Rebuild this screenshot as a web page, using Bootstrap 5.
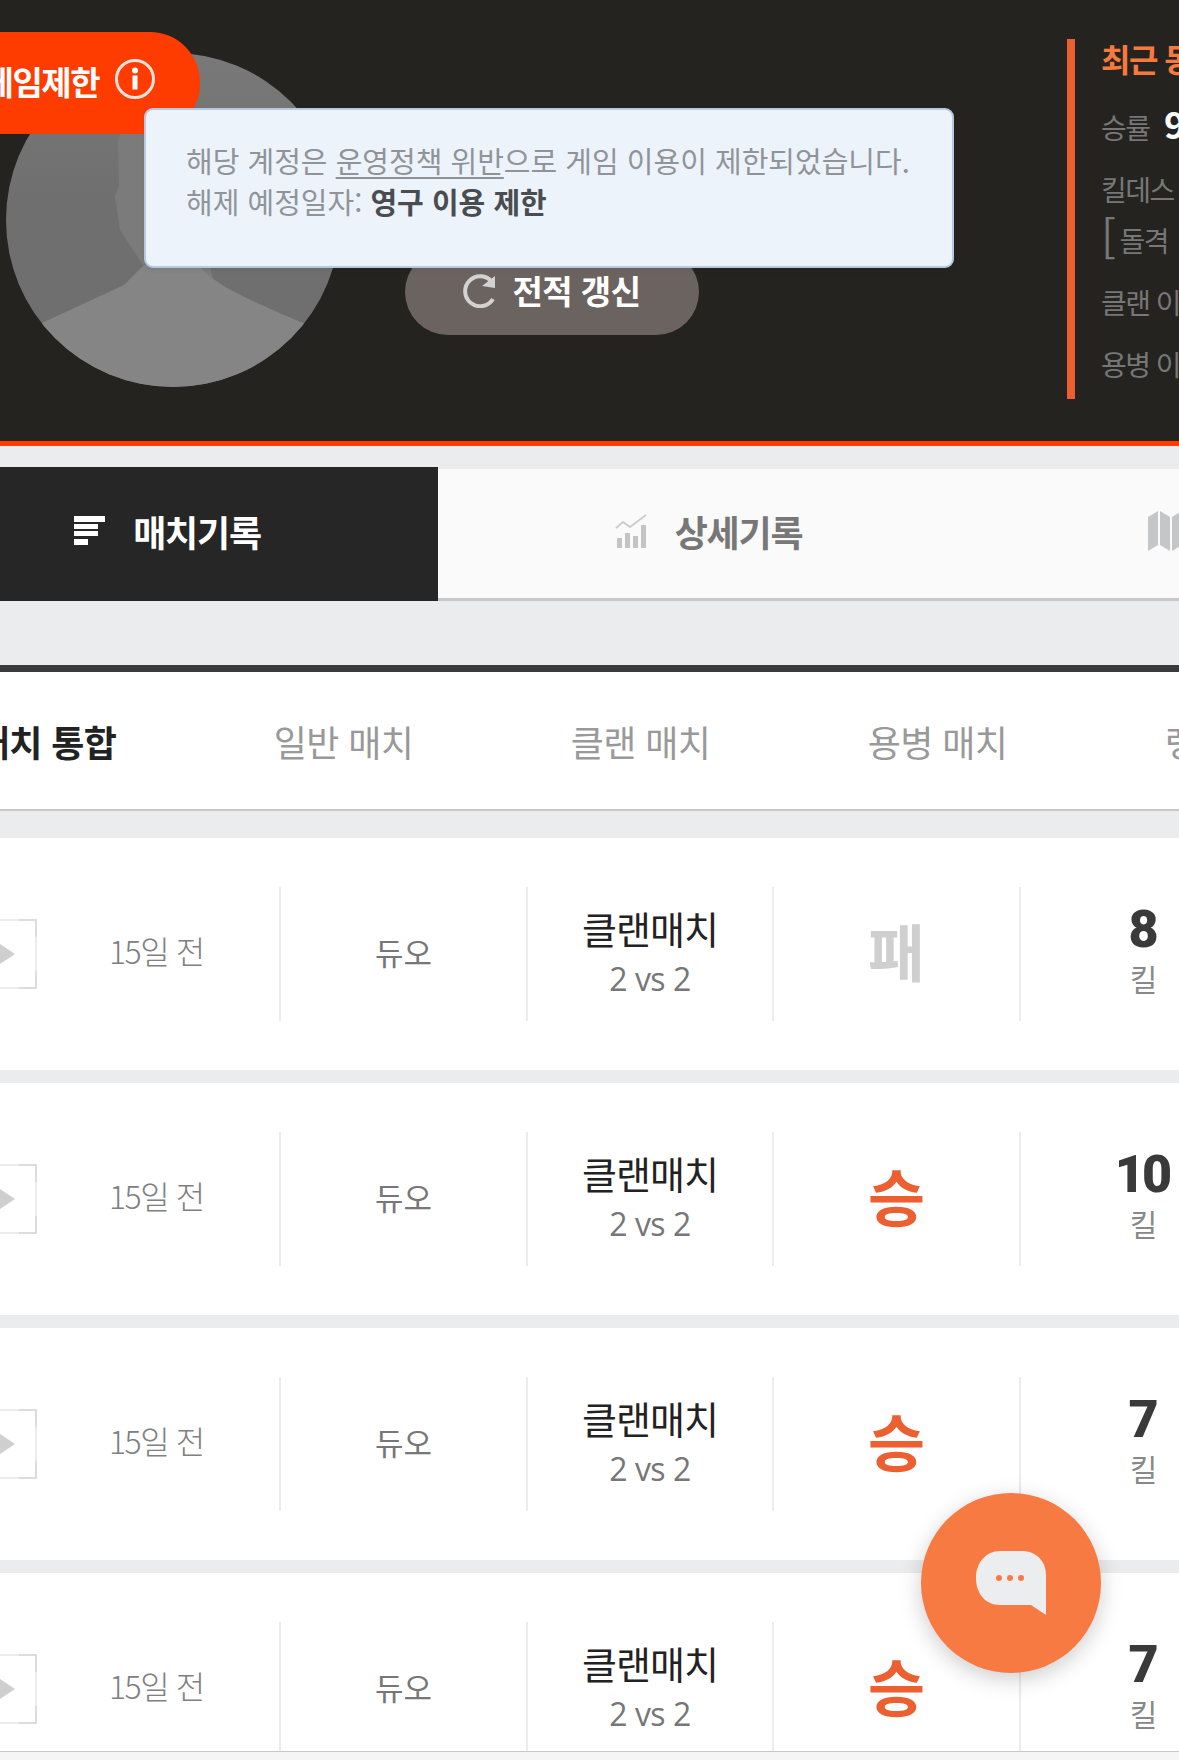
<!DOCTYPE html>
<html lang="ko">
<head>
    <meta charset="UTF-8">
    <meta name="viewport" content="width=device-width, initial-scale=1.0">
    <title>매치기록</title>
    <link href="https://cdn.jsdelivr.net/npm/bootstrap@5.3.0/dist/css/bootstrap.min.css" rel="stylesheet">
    <style>
        body { width: 1179px; height: 1760px; overflow: hidden; background: #ebecee; font-family: "Noto Sans CJK KR", "Noto Sans", sans-serif; }
        /* 상단 프로필 */
        .profile-top { height: 446px; background: #24231f; border-bottom: 5px solid #ff3c00; }
        .avatar-pic { width: 334px; height: 334px; margin: 53px 0 0 6px; flex-shrink: 0; }
        .limit-tag { left: -40px; top: 32px; width: 240px; height: 102px; background: #ff3c00; border-radius: 0 50px 50px 0; padding: 0 44px 2px 0; gap: 15px; font-size: 33px; letter-spacing: -1.5px; }
        .limit-tag svg { margin-bottom: 6px; }
        .refresh-btn { width: 294px; height: 86px; margin: 249px 0 0 65px; background: #6b6360; color: #fff; font-size: 33px; letter-spacing: -.5px; gap: 15px; flex-shrink: 0; padding: 0 0 2px; }
        .refresh-btn:hover { background: #6b6360; color: #fff; }
        .stat-box { width: 300px; height: 360px; margin: 39px 0 0 368px; padding: 1px 0 0 26px; border-left: 8px solid #ec5f31; flex-shrink: 0; color: #777; font-size: 28px; line-height: 36px; letter-spacing: -1.5px; white-space: nowrap; }
        .stat-title { color: #f6793f; font-size: 32px; font-weight: 700; }
        .stat-value { color: #fff; font-weight: 700; font-size: 36px; margin-left: 8px; }
        .stat-a { margin-top: 29px; }
        .stat-b { margin-top: 26px; }
        .stat-c { margin-top: 11px; }
        .stat-c i { font-style: normal; font-size: 44px; margin-right: 5px; vertical-align: -3px; }
        .notice-box { left: 144px; top: 108px; width: 810px; height: 160px; padding: 30px 0 0 40px; background: #edf3fb; border: 2px solid #b6c9e2; border-radius: 9px; color: #909498; font-size: 29px; line-height: 41px; letter-spacing: 0; white-space: nowrap; }
        .notice-box u { text-underline-offset: 4px; }
        .notice-box b { color: #4a4d50; }
        /* 탭 */
        .record-tabs { margin: 21px 0 0 -103px; width: 1700px; flex-wrap: nowrap; }
        .record-tab { width: 541px; height: 132px; margin-top: 2px; padding-bottom: 6px; background: #fafafa; border-bottom: 3px solid #c6c7c9; color: #777; font-size: 36px; font-weight: 700; gap: 28px; letter-spacing: -1.2px; flex-shrink: 0; }
        .record-tab.on { height: 134px; margin-top: 0; padding-bottom: 7px; background: #262626; color: #fff; border-bottom: 0; }
        .sub-tabs { margin: 64px 0 0 -102px; width: 1700px; height: 146px; background: #fff; border-top: 7px solid #3a3a3a; border-bottom: 2px solid #c8c8c8; flex-wrap: nowrap; }
        .sub-tab { width: 297px; color: #999; font-size: 36px; letter-spacing: -.6px; flex-shrink: 0; }
        .sub-tab.on { color: #222; font-weight: 700; }
        /* 매치 목록 */
        .match-list { margin-top: 27px; }
        .match-row { display: grid; grid-template-columns: 279px 247px 246px 247px 247px; height: 232px; margin-bottom: 13px; background: #fff; align-items: center; }
        .match-cell { height: 134px; border-left: 2px solid #ececec; text-align: center; }
        .match-thumb { margin-left: -33px; width: 70px; height: 70px; flex-shrink: 0; }
        .match-date { margin-left: 72px; padding-bottom: 8px; color: #808080; font-size: 32px; letter-spacing: -1.5px; font-weight: 300; white-space: nowrap; }
        .match-mode { padding-bottom: 4px; color: #777; font-size: 31px; }
        .match-type { color: #222; font-size: 38px; line-height: 50px; letter-spacing: -1px; }
        .match-vs { margin-top: 6px; color: #777; font-size: 32px; line-height: 40px; font-family: "Open Sans", "Noto Sans CJK KR", sans-serif; letter-spacing: -.5px; }
        .match-info { padding-bottom: 6px; }
        .result-lose, .result-win { padding-bottom: 8px; font-size: 62px; font-weight: 700; }
        .result-lose { color: #cfcfcf; }
        .result-win { color: #ec5f31; }
        .kill-info { padding-bottom: 8px; }
        .kill-num { color: #3a3a3a; font-family: Roboto, sans-serif; font-weight: 900; font-size: 52px; line-height: 56px; letter-spacing: -3px; padding-right: 3px; }
        .kill-unit { color: #888; font-size: 30px; line-height: 40px; }
        /* 하단 고정 */
        .bottom-strip { left: 0; right: 0; bottom: 0; height: 9px; background: #f5f5f5; border-top: 1px solid #c8c8c8; }
        .chat-fab { right: 78px; bottom: 87px; width: 180px; height: 180px; background: #f87a43; box-shadow: 0 6px 22px rgba(0,0,0,.2); }
    </style>
</head>
<body>

    <header class="profile-top d-flex position-relative">
        <svg class="avatar-pic" viewBox="0 0 334 334">
            <defs>
                <clipPath id="avatarClip"><circle cx="167" cy="167" r="167"/></clipPath>
                <linearGradient id="avatarBg" x1="0" y1="0" x2="0" y2="1"><stop offset="0" stop-color="#797979"/><stop offset=".45" stop-color="#6f6f6f"/></linearGradient>
            </defs>
            <g clip-path="url(#avatarClip)">
                <rect width="334" height="334" fill="url(#avatarBg)"/>
                <path d="M112 90 C114 72 130 60 170 60 L210 240 L137 212 L114 177 L109 144 L113 132 Z" fill="#7b7b7b"/>
                <path d="M-10 300 L38 269 L118 232 L138 212 L195 215 C210 232 240 246 297 270 L350 300 V340 H-10 Z" fill="#858585"/>
            </g>
        </svg>
        <button class="btn refresh-btn rounded-pill border-0 d-flex align-items-center justify-content-center fw-bold" type="button">
            <svg width="34" height="34" viewBox="0 0 34 34" fill="none">
                <path d="M29 8 A15 15 0 1 0 30 25" stroke="#d2d2d2" stroke-width="4"/>
                <path d="M19 12 L32 2 V14 Z" fill="#d2d2d2"/>
            </svg>
            <span>전적 갱신</span>
        </button>
        <div class="stat-box">
            <div class="stat-title">최근 동향</div>
            <div class="stat-a">승률 <span class="stat-value">96%</span></div>
            <div class="stat-b">킬데스 비율</div>
            <div class="stat-c"><i>[</i>돌격</div>
            <div class="stat-b">클랜 이용</div>
            <div class="stat-b">용병 이용</div>
        </div>

        <div class="limit-tag position-absolute d-flex align-items-center justify-content-end text-white fw-bold">
            <span>게임제한</span>
            <svg width="42" height="42" viewBox="0 0 42 42" fill="none">
                <circle cx="21" cy="21" r="18.5" stroke="#fff" stroke-width="3" opacity=".85"/>
                <circle cx="21" cy="12.5" r="3" fill="#fff"/>
                <rect x="18.5" y="17.5" width="5" height="14" fill="#fff"/>
            </svg>
        </div>

        <div class="notice-box position-absolute shadow-sm">
            해당 계정은 <u>운영정책 위반</u>으로 게임 이용이 제한되었습니다.<br>
            해제 예정일자: <b>영구 이용 제한</b>
        </div>
    </header>

    <nav class="nav record-tabs">
        <a class="record-tab on d-flex align-items-center justify-content-center text-decoration-none" href="#">
            <svg width="31" height="29" viewBox="0 0 31 29"><path d="M0 0H31V6H0ZM0 8H24V13H0ZM0 15H24V20H0ZM0 23H14V29H0Z" fill="#fff"/></svg>
            <span>매치기록</span>
        </a>
        <a class="record-tab d-flex align-items-center justify-content-center text-decoration-none" href="#">
            <svg width="32" height="34" viewBox="0 0 32 34" fill="none">
                <path d="M1 14 L8 8 L15 13 L31 1" stroke="#cdcdcd" stroke-width="2"/>
                <path d="M2 24H7V34H2ZM10 19H15V34H10ZM18 22H23V34H18ZM26 11H31V34H26Z" fill="#c4c4c4"/>
            </svg>
            <span>상세기록</span>
        </a>
        <a class="record-tab d-flex align-items-center justify-content-center text-decoration-none" href="#">
            <svg width="48" height="40" viewBox="0 0 48 40"><path d="M0 6 L10 0 V34 L0 40ZM12 0 L22 6 V40 L12 34ZM24 6 L34 0 V34 L24 40ZM36 0 L46 6 V40 L36 34Z" fill="#c4c6c8"/></svg>
            <span>맵별기록</span>
        </a>
    </nav>

    <nav class="nav sub-tabs">
        <a class="sub-tab on d-flex align-items-center justify-content-center text-decoration-none" href="#">매치 통합</a>
        <a class="sub-tab d-flex align-items-center justify-content-center text-decoration-none" href="#">일반 매치</a>
        <a class="sub-tab d-flex align-items-center justify-content-center text-decoration-none" href="#">클랜 매치</a>
        <a class="sub-tab d-flex align-items-center justify-content-center text-decoration-none" href="#">용병 매치</a>
        <a class="sub-tab d-flex align-items-center justify-content-center text-decoration-none" href="#">랭크 매치</a>
    </nav>

    <div id="matches" class="match-list"></div>

    <div class="bottom-strip position-fixed"></div>

    <div class="chat-fab position-fixed rounded-circle d-flex align-items-center justify-content-center">
        <svg width="70" height="64" viewBox="0 0 70 64">
            <path d="M24 0 H46 C60 0 70 10 70 24 V64 L55 54 H24 C10 54 0 43 0 27 C0 12 10 0 24 0Z" fill="#ecedef"/>
            <circle cx="23" cy="27" r="3" fill="#f87a43"/><circle cx="34" cy="27" r="3" fill="#f87a43"/><circle cx="45" cy="27" r="3" fill="#f87a43"/>
        </svg>
    </div>

    <script src="https://cdn.jsdelivr.net/npm/bootstrap@5.3.0/dist/js/bootstrap.bundle.min.js"></script>
    <script>
        const matches = [
            { result: "패", kills: 8 },
            { result: "승", kills: 10 },
            { result: "승", kills: 7 },
            { result: "승", kills: 7 }
        ];

        let matchHTML = "";
        matches.forEach(match => {
            const resultClass = match.result === "승" ? "result-win" : "result-lose";
            matchHTML += `
                <div class="match-row">
                    <div class="d-flex align-items-center">
                        <svg class="match-thumb" viewBox="0 0 70 70">
                            <rect x="1" y="1" width="68" height="68" fill="#fff" stroke="#ececec" stroke-width="2"/>
                            <path d="M52 1H69V18M69 52V69H52" fill="none" stroke="#dcdcdc" stroke-width="2"/>
                            <path d="M24 19 L48 35 L24 51 Z" fill="#cfcfcf"/>
                        </svg>
                        <span class="match-date">15일 전</span>
                    </div>
                    <div class="match-cell d-flex align-items-center justify-content-center match-mode">듀오</div>
                    <div class="match-cell match-info d-flex flex-column justify-content-center">
                        <div class="match-type">클랜매치</div>
                        <div class="match-vs">2 vs 2</div>
                    </div>
                    <div class="match-cell d-flex align-items-center justify-content-center ${resultClass}">${match.result}</div>
                    <div class="match-cell kill-info d-flex flex-column justify-content-center">
                        <div class="kill-num">${match.kills}</div>
                        <div class="kill-unit">킬</div>
                    </div>
                </div>`;
        });
        document.getElementById("matches").innerHTML = matchHTML;
    </script>
</body>
</html>
